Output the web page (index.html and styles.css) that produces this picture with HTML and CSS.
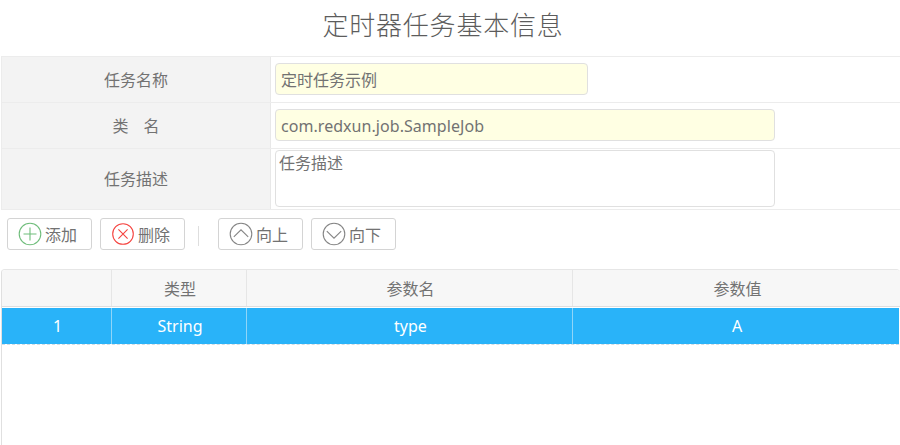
FILE: index.html
```html
<!DOCTYPE html>
<html lang="zh-CN">
<head>
<meta charset="utf-8">
<title>定时器任务基本信息</title>
<link rel="stylesheet" href="styles.css">
</head>
<body>
<h1 class="title">定时器任务基本信息</h1>
<div class="form">
  <div class="row"><div class="label">任务名称</div><div class="cell"><div class="field short"><span>定时任务示例</span></div></div></div>
  <div class="row"><div class="label name"><span>类</span><span>名</span></div><div class="cell"><div class="field"><span class="latin">com.redxun.job.SampleJob</span></div></div></div>
  <div class="row tall"><div class="label">任务描述</div><div class="cell"><div class="field area"><span>任务描述</span></div></div></div>
</div>
<div class="toolbar">
  <div class="btn"><svg class="green" viewBox="0 0 24 24"><circle cx="12" cy="12" r="10.8"/><path d="M12 5.5v13M5.5 12h13"/></svg><span>添加</span></div>
  <div class="btn"><svg class="red" viewBox="0 0 24 24"><circle cx="12" cy="12" r="10.3"/><path d="M7.4 7.4l9.2 9.2M16.6 7.4l-9.2 9.2"/></svg><span>删除</span></div>
  <div class="sep"></div>
  <div class="btn"><svg viewBox="0 0 24 24"><circle cx="12" cy="12" r="10.8"/><path d="M4.8 14.8L12 7.8l7.2 7"/></svg><span>向上</span></div>
  <div class="btn"><svg viewBox="0 0 24 24"><circle cx="12" cy="12" r="10.8"/><path d="M4.8 9.2l7.2 7 7.2-7"/></svg><span>向下</span></div>
</div>
<div class="grid">
  <div class="line head"><div></div><div><span>类型</span></div><div><span>参数名</span></div><div><span>参数值</span></div></div>
  <div class="line selected"><div>1</div><div>String</div><div>type</div><div>A</div></div>
</div>
</body>
</html>
```
FILE: styles.css
```css
* { box-sizing: border-box; }
body {
  margin: 0;
  height: 445px;
  overflow: hidden;
  display: flex;
  flex-direction: column;
  background: #fff;
  color: #727272;
  font: 400 16px/24px "Noto Sans", "Noto Sans CJK SC", sans-serif;
}
.title {
  margin: 0;
  height: 56px;
  padding: 7px 14px 0 0;
  text-align: center;
  font-size: 26px;
  line-height: 36px;
  font-weight: 300;
  letter-spacing: .8px;
  color: #5c5c5c;
  flex: none;
}
.form {
  flex: none;
  margin-left: 1px;
  border-top: 1px solid #ececec;
  border-left: 1px solid #ececec;
}
.row { display: flex; height: 46px; border-bottom: 1px solid #ececec; }
.tall { height: 61px; }
.label {
  width: 269px;
  display: flex;
  align-items: center;
  justify-content: center;
  background: #f3f3f3;
  border-right: 1px solid #e8e8e8;
}
.name { gap: 15px; }
.cell { flex: 1; display: flex; align-items: flex-start; padding: 6px 0 0 4px; }
.tall .cell { padding-top: 1px; }
.field {
  width: 500px;
  height: 32px;
  padding: 2px 5px 0;
  display: flex;
  align-items: center;
  background: #ffffe3;
  border: 1px solid #e0e0e0;
  border-radius: 4px;
}
.short { width: 313px; }
.area { height: 57px; background: #fff; align-items: flex-start; padding: 0 3px; }
.latin { letter-spacing: 0.05px; }
.toolbar {
  flex: none;
  display: flex;
  height: 59px;
  padding: 8px 7px 0;
  gap: 8px;
}
.btn {
  width: 85px;
  height: 32px;
  display: flex;
  align-items: center;
  gap: 3px;
  padding-left: 10px;
  border: 1px solid #d4d4d4;
  border-radius: 3px;
}
.btn span { padding-top: 1px; }
.btn svg {
  width: 24px;
  height: 24px;
  fill: none;
  stroke: #858585;
  stroke-width: 1.1;
}
.btn .green { stroke: #6fbd7b; }
.btn .red { stroke: #f5433f; }
.sep { width: 1px; height: 20px; margin: 8px 11px 0 5px; background: #dedede; }
.grid {
  flex: 1;
  margin-left: 1px;
  border-top: 1px solid #e6e6e6;
  border-left: 1px solid #e0e0e0;
  border-radius: 4px 4px 0 0;
}
.line { display: grid; grid-template-columns: 110px 135px 326px 1fr; }
.line > div {
  display: flex;
  align-items: center;
  justify-content: center;
  border-right: 1px solid #e6e6e6;
}
.line > div:last-child { border-right: 0; }
.head {
  height: 37px;
  background: #f7f7f7;
  border-bottom: 1px solid #dedede;
  border-radius: 4px 4px 0 0;
}
.head span { padding: 2px 0 0 2px; }
.selected {
  height: 38px;
  margin-right: 1px;
  padding-top: 1px;
  background: #29b3f9 content-box;
  border-bottom: 1px dashed #d2dde3;
  color: #fff;
}
.selected > div { padding-left: 2px; border-color: #8fd5f8; }
```
